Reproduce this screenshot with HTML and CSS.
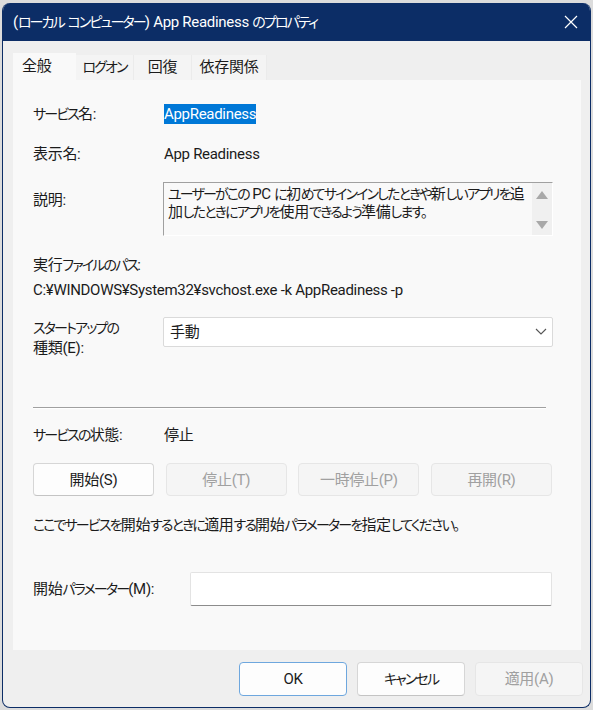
FILE: index.html
```html
<!DOCTYPE html>
<html lang="ja">
<head>
<meta charset="utf-8">
<title>App Readiness のプロパティ</title>
<link rel="stylesheet" href="styles.css">
</head>
<body>
<div class="window">
  <div class="titlebar">
    <span class="title">(<span class="k">ローカル</span> <span class="k">コンピューター</span>) App Readiness <span class="k">のプロパティ</span></span>
    <span class="close">
      <svg width="14" height="14" viewBox="0 0 14 14"><path d="M1 1 L13 13 M13 1 L1 13" stroke="#fff" stroke-width="1.2" fill="none"/></svg>
    </span>
  </div>
  <div class="body">
    <div class="tabs">
      <div class="tab active">全般</div>
      <div class="tab"><span class="k">ログオン</span></div>
      <div class="tab">回復</div>
      <div class="tab">依存関係</div>
    </div>
    <div class="panel">
      <div class="row r1">
        <div class="label"><span class="k">サービス</span>名:</div>
        <div class="value"><span class="selected">AppReadiness</span></div>
      </div>
      <div class="row r2">
        <div class="label">表示名:</div>
        <div class="value">App Readiness</div>
      </div>
      <div class="row r3">
        <div class="label lbl-desc">説明:</div>
        <div class="desc">
          <div class="desc-text"><span class="k">ユーザーがこの</span> PC <span class="k">に</span>初<span class="k">めてサインインしたときや</span>新<span class="k">しいアプリを</span>追<br>加<span class="k">したときにアプリを</span>使用<span class="k">できるよう</span>準備<span class="k">します。</span></div>
          <div class="scroll">
            <svg width="12" height="8" viewBox="0 0 12 8"><path d="M6 0 L12 8 L0 8 Z" fill="#a8a8a8"/></svg>
            <svg width="12" height="8" viewBox="0 0 12 8"><path d="M0 0 L12 0 L6 8 Z" fill="#a8a8a8"/></svg>
          </div>
        </div>
      </div>
      <div class="line r4">実行<span class="k">ファイルのパス</span>:</div>
      <div class="line r5">C:¥WINDOWS¥System32¥svchost.exe -k AppReadiness -p</div>
      <div class="row r6">
        <div class="label lbl-start"><span class="k">スタートアップの</span><br>種類(E):</div>
        <div class="combo">
          <span>手動</span>
          <svg width="12" height="8" viewBox="0 0 12 8"><path d="M1 1 L6 6 L11 1" stroke="#555" stroke-width="1.1" fill="none"/></svg>
        </div>
      </div>
      <div class="separator"></div>
      <div class="row r7">
        <div class="label"><span class="k">サービスの</span>状態:</div>
        <div class="value">停止</div>
      </div>
      <div class="svc-buttons">
        <div class="btn">開始(S)</div>
        <div class="btn disabled">停止(T)</div>
        <div class="btn disabled">一時停止(P)</div>
        <div class="btn disabled">再開(R)</div>
      </div>
      <div class="line r8"><span class="k">ここでサービスを</span>開始<span class="k">するときに</span>適用<span class="k">する</span>開始<span class="k">パラメーターを</span>指定<span class="k">してください。</span></div>
      <div class="row r9">
        <div class="label lbl-param">開始<span class="k">パラメーター</span>(M):</div>
        <div class="input"></div>
      </div>
    </div>
    <div class="footer">
      <div class="btn fbtn ok">OK</div>
      <div class="btn fbtn"><span class="k">キャンセル</span></div>
      <div class="btn fbtn disabled">適用(A)</div>
    </div>
  </div>
</div>
</body>
</html>
```

FILE: styles.css
```css
* { box-sizing: border-box; }
html, body { margin: 0; padding: 0; }
body {
  width: 593px;
  height: 710px;
  background: #dcdcdc;
  font-family: Roboto, "Noto Sans CJK JP", sans-serif;
  font-feature-settings: "palt";
  font-size: 15px;
  letter-spacing: -0.3px;
  color: #1b1b1b;
  overflow: hidden;
}
.k { font-size: 14px; letter-spacing: -1.85px; }
.window {
  margin: 3px 0 0 2px;
  width: 589px;
  height: 705px;
  border: 1px solid #0c2d66;
  border-top: none;
  border-radius: 8px;
  background: #efefef;
  overflow: hidden;
}
.titlebar {
  height: 38px;
  background: #0c2d66;
  color: #fff;
  display: flex;
  align-items: center;
  justify-content: space-between;
  padding: 0 13px 0 10px;
  margin: 0 -1px;
}
.title { font-size: 15px; line-height: 20px; padding-left: 1px; white-space: nowrap; }
.close { display: flex; width: 14px; height: 14px; }
.body { padding: 12px 9px 0 10px; }
.tabs { display: flex; height: 27px; align-items: flex-end; }
.tab {
  height: 25px;
  line-height: 25px;
  background: #f4f4f4;
  border-right: 1px solid #ebebeb;
  text-align: center;
}
.tab:nth-child(2) { width: 58px; }
.tab:nth-child(3) { width: 58px; }
.tab:nth-child(4) { width: 75px; }
.tab.active {
  height: 27px;
  line-height: 26px;
  width: 63px;
  background: #f9f9f9;
  border-right: none;
  text-align: left;
  padding-left: 9px;
}
.panel {
  height: 570px;
  background: #f9f9f9;
  padding: 24px 28px 0 20px;
  display: flex;
  flex-direction: column;
}
.row { display: flex; }
.label { width: 131px; flex: none; line-height: 20px; white-space: nowrap; }
.value { line-height: 20px; }
.line { line-height: 20px; white-space: nowrap; }
.selected { background: #0078d7; color: #fff; display: inline-block; line-height: 20px; }
.r2 { margin-top: 20px; }
.r3 { margin-top: 18px; }
.lbl-desc { padding-top: 8px; }
.desc {
  margin-left: -1px;
  width: 390px;
  height: 54px;
  border: 1px solid #fff;
  border-top-color: #a0a0a0;
  border-left-color: #a0a0a0;
  display: flex;
}
.desc-text {
  flex: 1;
  padding: 2px 2px 0 4px;
  line-height: 18px;
  white-space: nowrap;
  overflow: hidden;
}
.scroll {
  width: 20px;
  flex: none;
  background: #f0f0f0;
  display: flex;
  flex-direction: column;
  justify-content: space-between;
  align-items: center;
  padding: 8px 0 6px;
}
.r4 { margin-top: 19px; }
.r5 { margin-top: 5px; }
.r6 { margin-top: 17px; }
.lbl-start { padding-top: 1px; }
.combo {
  margin-left: -1px;
  width: 390px;
  height: 30px;
  background: #fff;
  border: 1px solid #dadada;
  border-radius: 2px;
  display: flex;
  align-items: center;
  justify-content: space-between;
  padding: 0 5px 0 6px;
  line-height: 20px;
}
.separator {
  margin-top: 49px;
  width: 513px;
  border-top: 1px solid #a0a0a0;
  border-bottom: 1px solid #fff;
}
.r7 { margin-top: 16px; }
.svc-buttons {
  margin-top: 18px;
  display: flex;
  justify-content: space-between;
  width: 519px;
}
.btn {
  width: 121px;
  height: 33px;
  background: #fdfdfd;
  border: 1px solid #d6d6d6;
  border-bottom-color: #c4c4c4;
  border-radius: 4px;
  display: flex;
  align-items: center;
  justify-content: center;
  line-height: 20px;
}
.btn.disabled {
  background: #f5f5f5;
  border-color: #e6e6e6;
  color: #a0a0a0;
}
.r8 { margin-top: 19px; }
.r9 { margin-top: 37px; align-items: center; }
.lbl-param { width: 157px; }
.input {
  width: 362px;
  height: 34px;
  background: #fff;
  border: 1px solid #e3e3e3;
  border-bottom-color: #8c8c8c;
  border-radius: 2px;
}
.footer {
  margin-top: 12px;
  display: flex;
  justify-content: flex-end;
  gap: 10px;
  margin-right: -2px;
}
.fbtn { width: 108px; height: 34px; }
.fbtn.ok { border-color: #6ea7de; }
```
